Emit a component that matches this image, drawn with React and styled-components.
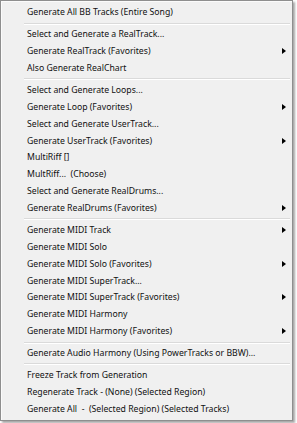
import React from 'react';
import styled, { createGlobalStyle } from 'styled-components';

const Global = createGlobalStyle`
  html, body { margin: 0; padding: 0; background: #ffffff; }
  #root { width: 297px; height: 423px; }
`;

const Menu = styled.div`
  box-sizing: border-box;
  width: 293px;
  height: 421px;
  background: #f0f0f0;
  border: 1px solid #8e8e8e;
  box-shadow: inset 1px 1px 0 #fbfbfb, 2px 2px 2px rgba(0, 0, 0, 0.35);
  padding: 3px 2px;
  display: flex;
  flex-direction: column;
  font-family: "Noto Sans", "Open Sans", sans-serif;
  font-size: 8.7px;
  color: #111;
`;

const Item = styled.div`
  height: 17px;
  display: flex;
  align-items: center;
  padding-left: 24px;
  padding-right: 4px;
  white-space: pre;
`;

const Label = styled.span`
  flex: 1;
`;

const Arrow = styled.span`
  width: 0;
  height: 0;
  border-top: 3.5px solid transparent;
  border-bottom: 3.5px solid transparent;
  border-left: 4px solid #000;
`;

const Sep = styled.div`
  height: 5px;
  display: flex;
  flex-direction: column;
  padding-left: 21px;
  padding-top: 2px;
  box-sizing: border-box;
  &::before {
    content: "";
    display: block;
    height: 1px;
    background: #dadada;
  }
  &::after {
    content: "";
    display: block;
    height: 1px;
    background: #ffffff;
  }
`;

const items = [
  ['Generate All BB Tracks (Entire Song)'],
  '-',
  ['Select and Generate a RealTrack...'],
  ['Generate RealTrack (Favorites)', true],
  ['Also Generate RealChart'],
  '-',
  ['Select and Generate Loops...'],
  ['Generate Loop (Favorites)', true],
  ['Select and Generate UserTrack...'],
  ['Generate UserTrack (Favorites)', true],
  ['MultiRiff []'],
  ['MultRiff...  (Choose)'],
  ['Select and Generate RealDrums...'],
  ['Generate RealDrums (Favorites)', true],
  '-',
  ['Generate MIDI Track', true],
  ['Generate MIDI Solo'],
  ['Generate MIDI Solo (Favorites)', true],
  ['Generate MIDI SuperTrack...'],
  ['Generate MIDI SuperTrack (Favorites)', true],
  ['Generate MIDI Harmony'],
  ['Generate MIDI Harmony (Favorites)', true],
  '-',
  ['Generate Audio Harmony (Using PowerTracks or BBW)...'],
  '-',
  ['Freeze Track from Generation'],
  ['Regenerate Track - (None) (Selected Region)'],
  ['Generate All  -  (Selected Region) (Selected Tracks)'],
];

export default function App() {
  return (
    <>
      <Global />
      <Menu>
        {items.map((it, i) =>
          it === '-' ? (
            <Sep key={i} />
          ) : (
            <Item key={i}>
              <Label>{it[0]}</Label>
              {it[1] && <Arrow />}
            </Item>
          )
        )}
      </Menu>
    </>
  );
}
